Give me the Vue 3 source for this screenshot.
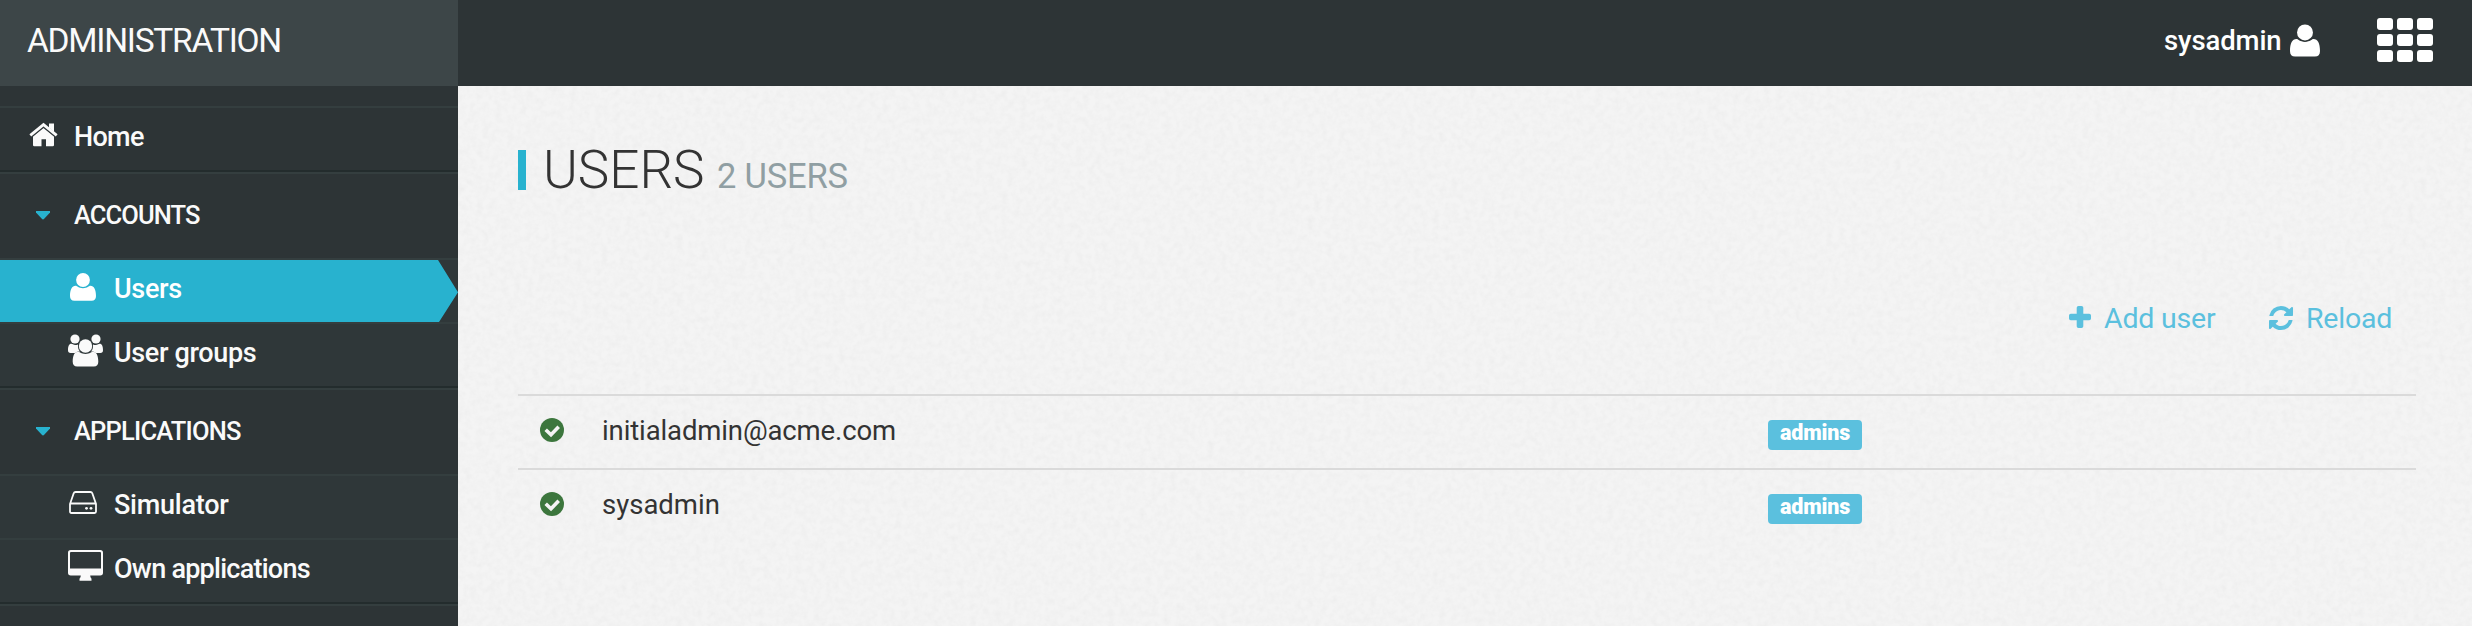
<script setup>
const applications = [
  { label: 'Simulator', icon: 'drive', cls: 't-simulator' },
  { label: 'Own applications', icon: 'desktop', cls: 't-own' },
]
const accounts = [
  { label: 'Users', icon: 'user', cls: 't-users', active: true },
  { label: 'User groups', icon: 'group', cls: 't-groups' },
]
const groups = [
  { title: 'ACCOUNTS', cls: 't-accounts', items: accounts },
  { title: 'APPLICATIONS', cls: 't-applications', items: applications },
]
const users = [
  { name: 'initialadmin@acme.com', role: 'admins', cls: 't-mail' },
  { name: 'sysadmin', role: 'admins', cls: 't-sys' },
]
</script>

<template>
  <div class="page">
    <svg class="defs" width="0" height="0" aria-hidden="true">
      <symbol id="user" viewBox="0 0 26 28">
        <circle cx="13" cy="7" r="6.9" />
        <path d="M5.6 12.8C7.4 12.8 8.4 15.2 13 15.2s5.6-2.4 7.4-2.4c3.6 0 5.6 3.8 5.6 10.2 0 3.2-1.500 4.800-4.400 4.800H4.400C1.500 27.800 0 26.200 0 23 0 16.600 2 12.800 5.600 12.800z" />
      </symbol>
    </svg>

    <header class="top">
      <div class="brand"><span class="t-brand">ADMINISTRATION</span></div>
      <div class="account">
        <span class="t-account">sysadmin</span>
        <svg class="account-icon"><use href="#user" /></svg>
        <div class="grid-icon"><i v-for="n in 9" :key="n"></i></div>
      </div>
    </header>

    <div class="body">
      <nav class="side">
        <div class="home">
          <svg class="home-icon" viewBox="0 0 29 24">
            <path d="M4 13.200 14.500 4.400 25 13.200V22q0 1.300-1.300 1.300H17v-7h-4.500v7H5.300Q4 23.300 4 22z" />
            <path d="M20 1h5v8.200l-5-4.200z" />
            <path d="M1 12.800 14.500 1.800 28 12.800" fill="none" stroke="#2d3436" stroke-width="5" />
            <path d="M20 .5h5v8.500l-5-4.200z" />
            <path d="M1.300 12.300 14.500 1.600 27.700 12.300" fill="none" stroke="#fafafa" stroke-width="2.800" />
          </svg>
          <span class="t-home">Home</span>
        </div>
        <section v-for="g in groups" :key="g.title">
          <div class="head">
            <svg class="caret" viewBox="0 0 14 9"><path d="M0 0h14v1.500L8.200 7.800Q7 9 5.800 7.800L0 1.500z" /></svg>
            <span :class="g.cls">{{ g.title }}</span>
          </div>
          <div v-for="it in g.items" :key="it.label" class="item" :class="{ active: it.active }">
            <div class="slot">
              <svg v-if="it.icon === 'user'" class="i-user"><use href="#user" /></svg>
              <svg v-else-if="it.icon === 'group'" class="i-group" viewBox="0 0 35 33">
                <circle cx="7" cy="5" r="4.600" />
                <circle cx="28" cy="5" r="4.600" />
                <path d="M3.300 9.800c1 0 2 1.200 4 1.200 1 0 2-.3 2.700-.6-.3 3 .5 5.600 2 7.200-2.200 0-3.500.4-4.700 1.400H2.600Q0 19 0 16.300c0-4 1-6.500 3.300-6.500z" />
                <path d="M31.700 9.800c-1 0-2 1.200-4 1.200-1 0-2-.3-2.700-.6.3 3-.5 5.600-2 7.200 2.200 0 3.500.4 4.700 1.400h4.700Q35 19 35 16.300c0-4-1-6.500-3.300-6.500z" />
                <circle cx="17.500" cy="12" r="6.700" />
                <path d="M10 17.800c1.800 0 3 2.200 7.500 2.200s5.700-2.200 7.500-2.200c3.600 0 5.300 4 5.300 10 0 3-1.500 4.700-4.500 4.700H9.200c-3 0-4.500-1.700-4.500-4.700 0-6 1.700-10 5.300-10z" />
              </svg>
              <svg v-else-if="it.icon === 'drive'" class="i-drive" viewBox="0 0 28 23">
                <path d="M1 13 4.700 2.300Q5.200 1 6.500 1h15q1.300 0 1.800 1.300L27 13v7.500q0 1.500-1.500 1.500h-23Q1 22 1 20.500zM1 12.500h26" fill="none" stroke="#fafafa" stroke-width="1.800" />
                <circle cx="17.500" cy="17.300" r="1.400" /><circle cx="22" cy="17.300" r="1.400" />
              </svg>
              <svg v-else class="i-desktop" viewBox="0 0 35 31">
                <path fill-rule="evenodd" d="M2.800 0h29.400Q35 0 35 2.800v20q0 2.700-2.800 2.700h-10q0 2 1.300 3.300v2H11.500v-2q1.300-1.300 1.300-3.300h-10Q0 25.500 0 22.800v-20Q0 0 2.800 0zM3 2q-1 0-1 1v15.500h31V3q0-1-1-1z" />
              </svg>
            </div>
            <span :class="it.cls">{{ it.label }}</span>
          </div>
        </section>
        <div class="rest"></div>
      </nav>

      <main class="main">
        <svg class="grain" aria-hidden="true">
          <filter id="paper" x="0" y="0" width="100%" height="100%">
            <feTurbulence type="fractalNoise" baseFrequency="0.16" numOctaves="3" seed="4" />
            <feColorMatrix values="0 0 0 0 0.450 0 0 0 0 0.450 0 0 0 0 0.450 0.110 0.110 0 0 -0.085" />
          </filter>
          <rect width="100%" height="100%" filter="url(#paper)" />
        </svg>
        <div class="content">
          <h1><i class="bar"></i><span class="t-title">USERS</span><small class="t-count">2 USERS</small></h1>
          <div class="actions">
            <a class="add">
              <svg class="i-plus" viewBox="0 0 22 22"><path d="M9.500 0h3q1.800 0 1.800 1.800v5.900h5.900q1.800 0 1.800 1.800v3q0 1.800-1.800 1.800h-5.900v5.900q0 1.800-1.800 1.800h-3q-1.800 0-1.800-1.800v-5.900H1.800Q0 14.300 0 12.500v-3q0-1.800 1.800-1.800h5.900V1.800Q7.700 0 9.500 0z" /></svg>
              <span class="t-add">Add user</span>
            </a>
            <a class="reload">
              <svg class="i-reload" viewBox="0 128 1536 1536"><path d="M1511 1056q0 5-1 7-64 268-268 434.500t-478 166.500q-146 0-282.500-55t-243.500-157l-129 129q-19 19-45 19t-45-19-19-45v-448q0-26 19-45t45-19h448q26 0 45 19t19 45-19 45l-137 137q71 66 161 102t187 36q134 0 250-65t186-179q11-17 53-117 8-23 30-23h192q13 0 22.500 9.500t9.500 22.500zm25-800v448q0 26-19 45t-45 19h-448q-26 0-45-19t-19-45 19-45l138-138q-148-137-349-137-134 0-250 65t-186 179q-11 17-53 117-8 23-30 23h-199q-13 0-22.500-9.500t-9.500-22.500v-7q65-268 270-434.500t480-166.500q146 0 284 55.500t245 156.500l130-129q19-19 45-19t45 19 19 45z" /></svg>
              <span class="t-reload">Reload</span>
            </a>
          </div>
          <div v-for="u in users" :key="u.name" class="row">
            <svg class="i-check" viewBox="0 0 24 24"><circle cx="12" cy="12" r="12" /><path d="M5.700 11.700 11 16.800 18.700 8.800" fill="none" stroke="#f4f4f4" stroke-width="3.600" /></svg>
            <span class="name" :class="u.cls">{{ u.name }}</span>
            <span class="badge"><span class="t-badge">{{ u.role }}</span></span>
          </div>
        </div>
      </main>
    </div>
  </div>
</template>

<style>
body { margin: 0; background: #f2f2f2; overflow: hidden; }
</style>

<style scoped>
.page { width: 2472px; height: 626px; overflow: hidden; font-family: Roboto, "Liberation Sans", sans-serif; color: #fafafa; display: flex; flex-direction: column; }
.page * { box-sizing: border-box; }
.page span, .page small { white-space: nowrap; }
svg { display: block; flex: none; fill: currentColor; overflow: visible; }
.defs { position: absolute; }
.top { height: 86px; flex: none; background: #2d3436; display: flex; justify-content: space-between; }
.brand { width: 458px; background: #3d4648; padding: 0 0 0 27px; font-size: 33.500px; line-height: 81px; font-weight: 400; letter-spacing: -1.250px; }
.account { display: flex; padding-right: 39px; color: #fff; font-size: 27.500px; line-height: 82px; }
.t-account { width: 126px; font-weight: 500; letter-spacing: -0.100px; }
.account-icon { width: 30px; height: 33px; margin-top: 24px; }
.grid-icon { margin: 18px 0 0 57px; display: grid; grid-template-columns: repeat(3, 16px); grid-auto-rows: 12px; gap: 4px; height: 44px; }
.grid-icon i { background: #fff; border-radius: 3px; }
.body { display: flex; flex: 1; min-height: 0; }
.side { width: 458px; flex: none; background: #2d3436; padding-top: 20px; font-weight: 500; }
.home { height: 66px; border-top: 2px solid #343e3f; border-bottom: 2px solid #232c2d; display: flex; font-size: 27px; line-height: 58px; }
.home-icon { width: 29px; height: 24px; margin: 15px 16px 0 29px; }
.t-home { letter-spacing: -0.700px; }
.head { height: 86px; border-top: 2px solid #343e3f; display: flex; font-size: 25.500px; line-height: 83px; }
.t-accounts { letter-spacing: -0.900px; }
.t-applications { letter-spacing: -0.800px; }
.caret { width: 14px; height: 9px; margin: 37px 24px 0 36px; color: #28b2cf; }
.item { height: 64px; background: #2f3739; border-top: 2px solid #343e3f; display: flex; font-size: 27px; line-height: 59px; }
.item:last-child { height: 66px; border-bottom: 2px solid #232c2d; }
.item.active { color: #fff; background: #28b2cf; background-clip: padding-box; position: relative; }
.item.active::after { content: ""; position: absolute; top: 0; right: 0; width: 20px; height: 62px; background: #2f3739; clip-path: polygon(0 0, 100% 0, 100% 100%, 5% 100%, 100% 52%); }
.t-users { letter-spacing: -0.300px; }
.t-groups { letter-spacing: -0.350px; }
.t-simulator { letter-spacing: -0.250px; }
.t-own { letter-spacing: -0.750px; }
.slot { width: 46px; margin-left: 68px; flex: none; }
.i-user { width: 26px; height: 28px; margin: 13px 0 0 2px; }
.i-group { width: 35px; height: 33px; margin-top: 10px; }
.i-drive { width: 28px; height: 23px; margin: 15px 0 0 1px; }
.i-desktop { width: 35px; height: 31px; margin-top: 10px; }
.rest { height: 22px; border-top: 2px solid #343e3f; }
.main { flex: 1; position: relative; background: #f4f4f4; }
.grain { position: absolute; inset: 0; width: 100%; height: 100%; }
.content { position: relative; padding: 64px 56px 0 60px; }
h1 { margin: 0; height: 40px; display: flex; color: #333; font-size: 53px; font-weight: 300; line-height: 40px; }
.bar { width: 8px; height: 40px; background: #28b2cf; margin-right: 17px; }
.t-title { width: 174px; }
.t-count { font-size: 34.500px; font-weight: 400; color: #909fa3; line-height: 53px; letter-spacing: -0.200px; }
.actions { height: 204px; display: flex; justify-content: flex-end; color: #5bc0de; font-size: 28.500px; line-height: 39px; padding: 109px 25px 0 0; }
.actions a { display: flex; height: 38px; }
.i-plus { width: 22px; height: 22px; margin: 7px 13px 0 0; }
.t-add, .t-reload { letter-spacing: -0.200px; }
.add { width: 200px; }
.reload { width: 122px; }
.i-reload { width: 24px; height: 24px; margin: 7px 13px 0 0; }
.row { height: 74px; border-top: 2px solid #dadada; display: flex; color: #333; font-size: 27.500px; line-height: 69px; }
.i-check { width: 24px; height: 24px; margin: 22px 38px 0 22px; color: #3c763d; }
.name { width: 1166px; }
.t-mail { letter-spacing: -0.120px; }
.badge { width: 94px; height: 30px; margin-top: 24px; border-radius: 4px; background: #5bc0de; color: #fff; font-size: 21.500px; font-weight: 900; line-height: 26px; padding-left: 12px; letter-spacing: -0.150px; }
</style>
